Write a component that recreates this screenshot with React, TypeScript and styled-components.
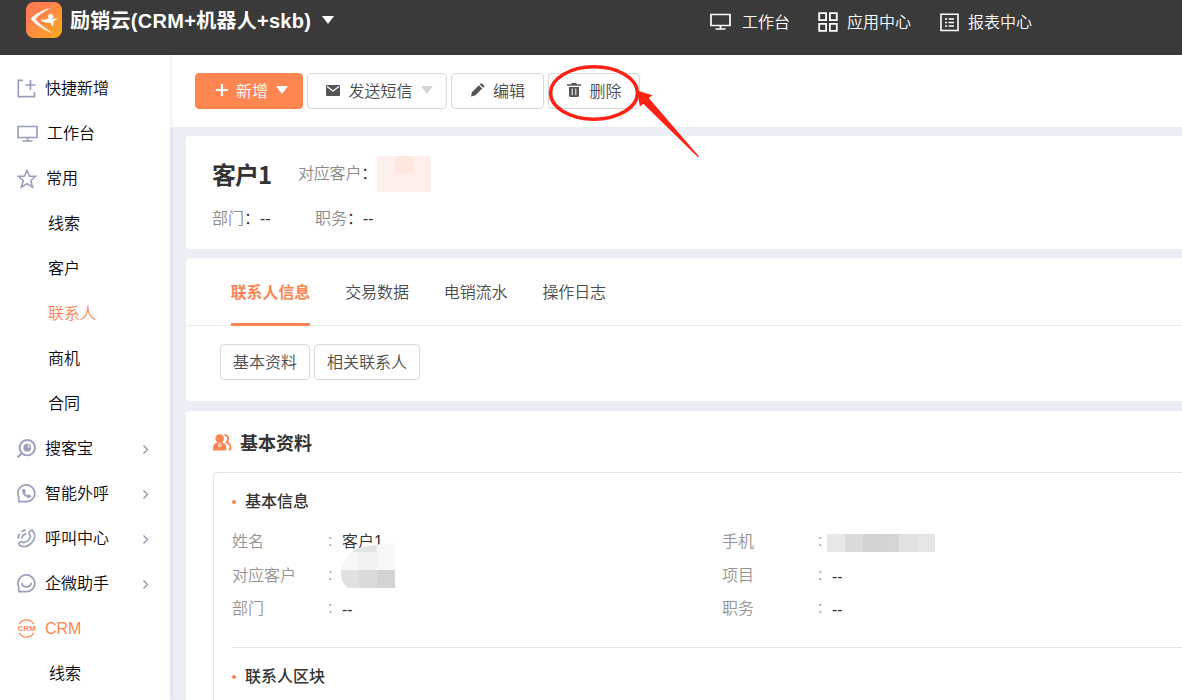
import React from 'react';
import styled, { createGlobalStyle } from 'styled-components';

const GlobalStyle = createGlobalStyle`
  * {
    box-sizing: border-box;
  }

  body {
    margin: 0;
    overflow: hidden;
    font-family: 'Liberation Sans', 'Noto Sans CJK SC', sans-serif;
    font-size: 16px;
    font-weight: 350;
    color: #333;
    background: #ebeef4;
  }

  svg {
    display: block;
    flex: none;
  }
`;

const Page = styled.div`
  height: 700px;
  display: flex;
  flex-direction: column;
  overflow: hidden;
`;

const TopBar = styled.header`
  height: 55px;
  flex: none;
  display: flex;
  padding: 0 150px 0 26px;
  justify-content: space-between;
  align-items: flex-start;
  background: #3a3a3a;
  color: #fff;
`;

const Brand = styled.div`
  display: flex;
  align-items: center;
  padding-top: 1px;
  height: 39px;
  font-size: 20px;
  font-weight: bold;
`;

const BrandName = styled.span`
  width: 242px;
  margin: -2px 10px 0 8px;
  letter-spacing: 0.28px;
  white-space: nowrap;
`;

const TopNav = styled.nav`
  display: flex;
  height: 45px;
`;

const TopNavItem = styled.a<{ gap: number; space?: number }>`
  display: flex;
  align-items: center;
  gap: ${props => props.gap}px;
  height: 44px;
  margin-left: ${props => props.space || 0}px;
`;

const TopNavLabel = styled.span`
  padding-bottom: 2px;
`;

const Body = styled.div`
  flex: 1;
  display: flex;
  min-height: 0;
`;

const Sidebar = styled.aside`
  width: 170px;
  flex: none;
  padding-top: 11px;
  background: #fff;
  box-shadow: 1px 0 5px rgba(0, 0, 0, 0.08);
  position: relative;
  overflow: hidden;
`;

const MenuItem = styled.a<{ active?: boolean; gap?: number; indent?: number }>`
  display: flex;
  align-items: center;
  gap: ${props => props.gap || 9}px;
  height: 45px;
  padding: 0 19px 0 ${props => props.indent || 17}px;
  color: ${props => (props.active ? '#ff8551' : '#08080f')};
`;

const MenuLabel = styled.span<{ latin?: boolean }>`
  flex: 1;
  padding-bottom: ${props => (props.latin ? 0 : 3)}px;
`;

const Main = styled.main`
  flex: 1;
  min-width: 0;
`;

const Toolbar = styled.div`
  height: 72px;
  display: flex;
  align-items: flex-start;
  gap: 4px;
  padding: 18px 0 0 25px;
  background: #fff;
`;

const ToolButton = styled.button<{ primary?: boolean; width: number; shift?: number }>`
  display: flex;
  align-items: center;
  justify-content: center;
  gap: 8px;
  width: ${props => props.width}px;
  height: 36px;
  padding: 0 0 2px ${props => props.shift || 0}px;
  border: 1px solid ${props => (props.primary ? '#ff8551' : '#d9d9d9')};
  border-radius: 4px;
  background: ${props => (props.primary ? '#ff8551' : '#fff')};
  color: ${props => (props.primary ? '#fff' : '#4c4c4c')};
  font: inherit;
`;

const Highlighted = styled.div`
  position: relative;
`;

const Annotation = styled.svg`
  position: absolute;
  left: -2px;
  top: -10px;
  z-index: 2;
  pointer-events: none;
`;

const Content = styled.div`
  display: flex;
  flex-direction: column;
  padding: 9px 0 0 16px;
`;

const Card = styled.section<{ height: number; space?: number }>`
  height: ${props => props.height}px;
  margin-bottom: ${props => props.space || 9}px;
  border-radius: 4px 0 0 4px;
  background: #fff;
`;

const SummaryCard = styled(Card)`
  padding: 20px 0 0 26px;
`;

const SummaryTitle = styled.div`
  display: flex;
  align-items: center;
  height: 36px;
`;

const Name = styled.h1`
  width: 86px;
  margin: 0;
  font-family: 'Noto Sans CJK SC', sans-serif;
  font-size: 24px;
  line-height: 36px;
  letter-spacing: -1px;
`;

const Muted = styled.span`
  color: #8a8a8a;
`;

const SummaryLabel = styled.span`
  width: 76px;
  padding-bottom: 4px;
  letter-spacing: -0.2px;
  white-space: nowrap;
`;

const SummaryRow = styled.div`
  display: flex;
  align-items: center;
  height: 34px;
  margin-top: 8px;
`;

const SummaryField = styled.div`
  width: 103px;
  white-space: nowrap;
`;

const TabBar = styled.div`
  display: flex;
  gap: 35px;
  height: 68px;
  padding-left: 44.7px;
  border-bottom: 1px solid #ebebeb;
`;

const Tab = styled.a<{ active?: boolean }>`
  height: 68px;
  line-height: 69px;
  letter-spacing: -0.1px;
  border-bottom: ${props => (props.active ? '3px solid #ff8551' : 'none')};
  color: ${props => (props.active ? '#ff8551' : '#4c4c4c')};
  font-weight: ${props => (props.active ? 'bold' : 'inherit')};
`;

const SubTabs = styled.div`
  display: flex;
  gap: 4px;
  padding: 18px 0 0 34px;
`;

const DetailCard = styled(Card)`
  padding: 13px 0 0 27px;
`;

const DetailHeader = styled.div`
  display: flex;
  align-items: center;
  gap: 8px;
  height: 36px;
`;

const DetailTitle = styled.h2`
  margin: 0;
  font-size: 18px;
`;

const DetailBox = styled.div`
  height: 300px;
  margin-top: 12px;
  padding: 9px 0 0 18px;
  border: 1px solid #e4e4e4;
  border-right: none;
  border-radius: 4px 0 0 0;
`;

const SectionTitle = styled.h3`
  display: flex;
  align-items: center;
  gap: 9px;
  height: 36px;
  margin: 0;
  font-size: 16px;
  font-weight: 500;

  &::before {
    content: '';
    width: 4px;
    height: 4px;
    margin-top: 3px;
    border-radius: 50%;
    background: #ff8551;
  }
`;

const FieldGrid = styled.div`
  display: grid;
  grid-template-columns: 490px 1fr;
  grid-template-rows: 34px 34px 33px;
  height: 130px;
  padding-top: 6px;
  margin-bottom: 9px;
  border-bottom: 1px solid #e4e4e4;
`;

const Field = styled.div`
  display: flex;
  align-items: center;
  position: relative;
`;

const FieldLabel = styled.span`
  width: 96px;
  padding-bottom: 3px;
  color: #949494;
`;

const FieldColon = styled.span`
  width: 14px;
  padding-bottom: 1px;
  color: #999;
`;

const FieldValue = styled.span<{ name?: boolean }>`
  padding-bottom: ${props => (props.name ? 3 : 0)}px;
  padding-top: ${props => (props.name ? 0 : 3)}px;
  color: #333;
`;

const PhoneMask = styled.svg`
  margin: 3px 0 0 -5px;
`;

const NameMask = styled.svg`
  position: absolute;
  left: 109px;
  top: -15px;
`;

const MonitorIcon = ({ color }: { color: string }) => (
  <svg width="21" height="18" viewBox="0 0 21 18" fill="none" stroke={color} strokeWidth="1.7">
    <path d="M1 1.5h19v11H1zM10.5 12.5v3M5.5 16h10" />
  </svg>
);

const AppsIcon = () => (
  <svg width="20" height="20" viewBox="0 0 20 20" fill="none" stroke="#fff" strokeWidth="1.8">
    <path d="M1.2 1.2h6.9v6.9H1.2zM11.9 1.2h6.9v6.9h-6.9zM1.2 11.9h6.9v6.9H1.2zM11.9 11.9h6.9v6.9h-6.9z" />
  </svg>
);

const ReportIcon = () => (
  <svg width="19" height="19" viewBox="0 0 19 19" fill="none" stroke="#fff" strokeWidth="1.6">
    <path d="M1 1.3h17v16.2H1z" />
    <path d="M5 6h2M8.5 6H14M5 9.5h2M8.5 9.5H14M5 13h2M8.5 13H14" />
  </svg>
);

const Logo = () => (
  <svg width="36" height="36" viewBox="0 0 36 36">
    <defs>
      <linearGradient id="logo" x1="0" y1="0" x2="1" y2="1">
        <stop offset="0.3" stopColor="#ff7f50" />
        <stop offset="1" stopColor="#fca91c" />
      </linearGradient>
    </defs>
    <rect width="36" height="36" rx="8" fill="url(#logo)" />
    <path
      d="M24.5 6C16.5 8 9.5 12 4.7 16.8c5 6 12.3 10.5 22 14.7-6-4.5-13.2-9-17.4-14.4C12.5 13 18.5 9.5 24.5 6z"
      fill="#fff"
    />
    <circle cx="24.7" cy="14.5" r="2.6" fill="#fff" />
    <path d="M14 17.500c3.600.5 6.200-.4 8.400-1.100l4 .9 5.600-1.300-4.400 3.500-.8 5.200-2.500-4.200c-3.800.5-7 .2-10.300-3z" fill="#fff" />
  </svg>
);

const Caret = ({ color, width = 12, height = 7 }: { color: string; width?: number; height?: number }) => (
  <svg width={width} height={height} viewBox="0 0 12 7" preserveAspectRatio="none">
    <path d="M0 0h12L6 7z" fill={color} />
  </svg>
);

const MenuIcon = ({ name }: { name: string }) => {
  const stroke = '#999fbd';
  switch (name) {
    case 'add':
      return (
        <svg width="19" height="19" viewBox="0 0 19 19" fill="none" stroke={stroke} strokeWidth="1.7">
          <path d="M6 1.3H1.3v16.4h16.2V13M8.5 6h10M13.5 1v10" />
        </svg>
      );
    case 'monitor':
      return <MonitorIcon color={stroke} />;
    case 'star':
      return (
        <svg width="20" height="20" viewBox="0 0 20 20" fill="none" stroke={stroke} strokeWidth="1.6">
          <path d="M10 1.3l2.5 6h6.300l-5 4.200 1.800 6.700L10 14.600l-5.600 3.600 1.800-6.700-5-4.200h6.300z" />
        </svg>
      );
    case 'search':
      return (
        <svg width="19" height="19" viewBox="0 0 19 19" fill="none" stroke={stroke} strokeWidth="1.9">
          <circle cx="10.3" cy="8.7" r="7.7" />
          <path d="M4.800 14.200L.6 18.400" strokeWidth="2" />
          <circle cx="10.3" cy="8.7" r="3.9" fill={stroke} stroke="none" />
          <path d="M10.600 8.400V6.600l1.900-1.800 1.900 1.800-1.900 1.800z" fill="#fff" stroke="none" />
          <circle cx="12.600" cy="6.700" r="1.100" fill={stroke} stroke="none" />
        </svg>
      );
    case 'phone':
      return (
        <svg width="19" height="19" viewBox="0 0 19 19" fill="none" stroke={stroke} strokeWidth="1.7">
          <path d="M1.8 17.700V13A8.400 8.400 0 1 1 9.400 17.700z" />
          <path d="M5.800 5.200l1.700-.4 1.400 2.900-1 1.100c.6 1.200 1.300 2 2.500 2.500l1.200-1 2.600 1.500c0 1.300-1 2.200-2.200 2.200-3.500-.5-6.400-3.800-6.900-7.200 0-.6.2-1.200.7-1.600z" fill={stroke} stroke="none" />
        </svg>
      );
    case 'call':
      return (
        <svg width="19" height="19" viewBox="0 0 19 19" fill="none" stroke={stroke} strokeWidth="1.7">
          <path d="M12.5 2.200l2.800-1.100c3.500 4.200 3 9.200-.6 12.800-3.300 3.300-7.500 4.600-11.800 2.700L1.600 14.300l3-1.900 2.100 1.300c3.600-.8 6-3.200 6.900-6.600l-1.400-1.900z" />
          <path d="M1.300 9.800C1.300 7.500 1.700 6 2.600 4.800M4.500 2.700C5.700 1.700 7 1.300 8.800 1.200M5 9.500C5 6.500 6.500 5.200 9.300 4.900" />
        </svg>
      );
    case 'smile':
      return (
        <svg width="19" height="19" viewBox="0 0 19 19" fill="none" stroke={stroke} strokeWidth="1.7">
          <path d="M1.8 17.700V13A8.400 8.400 0 1 1 9.400 17.700z" />
          <path d="M4.700 9a4.900 4.900 0 0 0 9.600 0" />
        </svg>
      );
    default:
      return (
        <svg width="19" height="19" viewBox="0 0 19 19" fill="none" stroke="#ff8551" strokeWidth="1.3">
          <path d="M2.200 5.300a8.300 8.300 0 0 1 14.600 0M2.200 13.700a8.300 8.300 0 0 0 14.600 0" />
          <text x="9.5" y="12.4" textAnchor="middle" textLength="18" lengthAdjust="spacingAndGlyphs" fontSize="8" fontWeight="bold" fill="#ff8551" stroke="none">CRM</text>
        </svg>
      );
  }
};

const Chevron = () => (
  <svg width="11" height="10" viewBox="0 0 11 10" fill="none" stroke="#8f95a8" strokeWidth="1.3">
    <path d="M3.5 1.5l4 4-4 4" />
  </svg>
);

const PeopleIcon = () => (
  <svg width="19" height="17" viewBox="0 0 19 17" fill="#ff8551">
    <circle cx="6.7" cy="4.5" r="4.3" />
    <path d="M0 16.500v-3.300C0 10.300 2 9 4.300 8.300h4.900c2.300.7 4 2 4 4.900v3.300z" />
    <circle cx="6.7" cy="11.300" r="1.4" fill="none" stroke="#fff" />
    <path d="M11.500.7c4 .3 4.700 5 2.100 7.500 2.400 1 4 3.200 4.200 6.600l-1.800 1.100" fill="none" stroke="#ff8551" strokeWidth="1.9" />
  </svg>
);

interface MenuEntry {
  label: string;
  icon?: string;
  gap?: number;
  indent?: number;
  active?: boolean;
  arrow?: boolean;
}

const menu: MenuEntry[] = [
  { label: '快捷新增', icon: 'add' },
  { label: '工作台', icon: 'monitor', gap: 9 },
  { label: '常用', icon: 'star' },
  { label: '线索', indent: 48 },
  { label: '客户', indent: 48 },
  { label: '联系人', indent: 48, active: true },
  { label: '商机', indent: 48 },
  { label: '合同', indent: 48 },
  { label: '搜客宝', icon: 'search', arrow: true },
  { label: '智能外呼', icon: 'phone', arrow: true },
  { label: '呼叫中心', icon: 'call', arrow: true },
  { label: '企微助手', icon: 'smile', arrow: true },
  { label: 'CRM', icon: 'crm', active: true },
  { label: '线索', indent: 49 },
];

const tabs = ['联系人信息', '交易数据', '电销流水', '操作日志'];

const phoneMask = ['#e8e8e8', '#dadada', '#d2d2d2', '#d5d5d5', '#e1e1e1', '#e5e5e5'];

const App: React.FC = () => {
  return (
    <Page>
      <GlobalStyle />
      <TopBar>
        <Brand>
          <Logo />
          <BrandName>励销云(CRM+机器人+skb)</BrandName>
          <Caret color="#fff" height={8} />
        </Brand>
        <TopNav>
          <TopNavItem gap={11}>
            <MonitorIcon color="#fff" />
            <TopNavLabel>工作台</TopNavLabel>
          </TopNavItem>
          <TopNavItem gap={9} space={28}>
            <AppsIcon />
            <TopNavLabel>应用中心</TopNavLabel>
          </TopNavItem>
          <TopNavItem gap={9} space={29}>
            <ReportIcon />
            <TopNavLabel>报表中心</TopNavLabel>
          </TopNavItem>
        </TopNav>
      </TopBar>

      <Body>
        <Sidebar>
          {menu.map((item, index) => (
            <MenuItem key={index} active={item.active} gap={item.gap} indent={item.indent}>
              {item.icon && <MenuIcon name={item.icon} />}
              <MenuLabel latin={item.icon === 'crm'}>{item.label}</MenuLabel>
              {item.arrow && <Chevron />}
            </MenuItem>
          ))}
        </Sidebar>

        <Main>
          <Toolbar>
            <ToolButton primary width={108} shift={6}>
              <svg width="12" height="12" viewBox="0 0 12 12" stroke="#fff" strokeWidth="2.2">
                <path d="M6 0v12M0 6h12" />
              </svg>
              新增
              <Caret color="#fff" height={8} />
            </ToolButton>
            <ToolButton width={140} shift={5}>
              <svg width="14" height="11" viewBox="0 0 14 11">
                <rect width="14" height="11" rx="1" fill="#555" />
                <path d="M1 1.5l6 4.500 6-4.500" fill="none" stroke="#fff" strokeWidth="1.2" />
              </svg>
              发送短信
              <Caret color="#d5d5d5" height={8} />
            </ToolButton>
            <ToolButton width={93}>
              <svg width="15" height="14" viewBox="0 0 15 14" fill="#555">
                <path d="M1 13.500l.9-4.200 7-7 3.300 3.300-7 7zM9.800 1.400l1-1c.3-.3.8-.3 1.100 0l2.300 2.300c.3.3.3.8 0 1.100l-1 1z" />
              </svg>
              编辑
            </ToolButton>
            <Highlighted>
              <ToolButton width={92} shift={1}>
                <svg width="14" height="14" viewBox="0 0 14 14" fill="#555">
                  <path d="M4.500 0h5v1.200H14v1.600H0V1.200h4.500zM2 4h10v8.500c0 .8-.7 1.500-1.500 1.500h-7c-.8 0-1.500-.7-1.500-1.500z" />
                  <path d="M5.200 5.500v6.700M8.800 5.500v6.700" stroke="#fff" strokeWidth="1" />
                </svg>
                删除
              </ToolButton>
              <Annotation width="160" height="100" viewBox="0 0 160 100">
                <ellipse cx="48" cy="30" rx="43.5" ry="26.2" fill="none" stroke="#ff2116" strokeWidth="3.6" />
                <path d="M91 27.500l15.500 4.800-3.800 2.700L153 93.500l-1 .8L97.300 40.800 94 43.500z" fill="#ff2116" />
              </Annotation>
            </Highlighted>
          </Toolbar>

          <Content>
            <SummaryCard height={113}>
              <SummaryTitle>
                <Name>客户1</Name>
                <SummaryLabel>
                  <Muted>对应客户</Muted>：
                </SummaryLabel>
                <svg width="62" height="36" viewBox="4 0 62 36">
                  <path d="M8 0C0 8 0 28 8 36z" fill="#fafafa" />
                  <path d="M7 0h54v36H7z" fill="#ffefec" />
                  <path d="M25 0h18v18H25z" fill="#ffe7e0" />
                </svg>
              </SummaryTitle>
              <SummaryRow>
                <SummaryField>
                  <Muted>部门</Muted>：--
                </SummaryField>
                <SummaryField>
                  <Muted>职务</Muted>：--
                </SummaryField>
              </SummaryRow>
            </SummaryCard>

            <Card height={143} space={10}>
              <TabBar>
                {tabs.map((tab, index) => (
                  <Tab key={tab} active={index === 0}>{tab}</Tab>
                ))}
              </TabBar>
              <SubTabs>
                <ToolButton width={90}>基本资料</ToolButton>
                <ToolButton width={106}>相关联系人</ToolButton>
              </SubTabs>
            </Card>

            <DetailCard height={340}>
              <DetailHeader>
                <PeopleIcon />
                <DetailTitle>基本资料</DetailTitle>
              </DetailHeader>
              <DetailBox>
                <SectionTitle>基本信息</SectionTitle>
                <FieldGrid>
                  <Field>
                    <FieldLabel>姓名</FieldLabel>
                    <FieldColon>:</FieldColon>
                    <FieldValue name>客户1</FieldValue>
                  </Field>
                  <Field>
                    <FieldLabel>手机</FieldLabel>
                    <FieldColon>:</FieldColon>
                    <PhoneMask width="108" height="18" viewBox="0 0 108 18">
                      {phoneMask.map((color, index) => (
                        <rect key={index} x={index * 18} width="18" height="18" fill={color} />
                      ))}
                    </PhoneMask>
                  </Field>
                  <Field>
                    <FieldLabel>对应客户</FieldLabel>
                    <FieldColon>:</FieldColon>
                    <NameMask width="54" height="45" viewBox="0 0 54 45">
                      <defs>
                        <clipPath id="brush">
                          <path d="M0 30C0 20 5 12 14 7c8-5 20-4 25-6l15-1v45H7C2 41 0 36 0 30z" />
                        </clipPath>
                      </defs>
                      <g clipPath="url(#brush)">
                        <path d="M0 0h54v45H0z" fill="#f7f7f7" />
                        <path d="M0 0h36v9H0z" fill="#e3e3e3" />
                        <path d="M18 9h18v18H18z" fill="#f2f2f2" />
                        <path d="M0 27h18v18H0z" fill="#e0e0e0" />
                        <path d="M18 27h18v18H18z" fill="#dadada" />
                        <path d="M36 27h18v18H36z" fill="#d3d3d3" />
                      </g>
                    </NameMask>
                  </Field>
                  <Field>
                    <FieldLabel>项目</FieldLabel>
                    <FieldColon>:</FieldColon>
                    <FieldValue>--</FieldValue>
                  </Field>
                  <Field>
                    <FieldLabel>部门</FieldLabel>
                    <FieldColon>:</FieldColon>
                    <FieldValue>--</FieldValue>
                  </Field>
                  <Field>
                    <FieldLabel>职务</FieldLabel>
                    <FieldColon>:</FieldColon>
                    <FieldValue>--</FieldValue>
                  </Field>
                </FieldGrid>
                <SectionTitle>联系人区块</SectionTitle>
              </DetailBox>
            </DetailCard>
          </Content>
        </Main>
      </Body>
    </Page>
  );
};

export default App;
